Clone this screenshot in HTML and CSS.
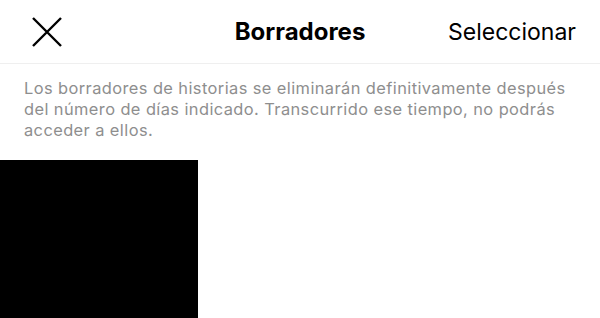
FILE: index.html
```html
<!DOCTYPE html>
<html lang="es">
<head>
<meta charset="utf-8">
<link rel="stylesheet" href="styles.css">
</head>
<body>
<header class="top">
  <div class="close">
    <svg width="32" height="32" viewBox="0 0 32 32"><path d="M2 2 L30 30 M30 2 L2 30" stroke="#000" stroke-width="2.4" fill="none"/></svg>
  </div>
  <div class="title">Borradores</div>
  <div class="select">Seleccionar</div>
</header>
<p class="note">Los borradores de historias se eliminarán definitivamente después del número de días indicado. Transcurrido ese tiempo, no podrás acceder a ellos.</p>
<div class="grid">
  <div class="tile"></div>
</div>
</body>
</html>
```
FILE: styles.css
```css
html, body { margin: 0; padding: 0; background: #fff; }
body { font-family: Inter, "Liberation Sans", sans-serif; width: 600px; height: 318px; overflow: hidden; }
.top {
  height: 63px;
  border-bottom: 1px solid #efefef;
  display: flex;
  align-items: center;
  justify-content: space-between;
  padding: 0 24px 0 31px;
  position: relative;
}
.close { width: 32px; height: 32px; display: flex; }
.title {
  position: absolute; left: 0; right: 0; text-align: center;
  font-weight: 700; font-size: 24px; color: #000; pointer-events: none;
}
.select { font-size: 23px; color: #000; }
.note {
  margin: 0;
  padding: 14px 24px 0 24px;
  font-size: 16.4px;
  line-height: 21px;
  letter-spacing: 0.42px;
  color: #8e8e8e;
  height: 96px;
  box-sizing: border-box;
}
.grid { display: grid; grid-template-columns: 198px; }
.tile { height: 160px; background: #000; }
```
